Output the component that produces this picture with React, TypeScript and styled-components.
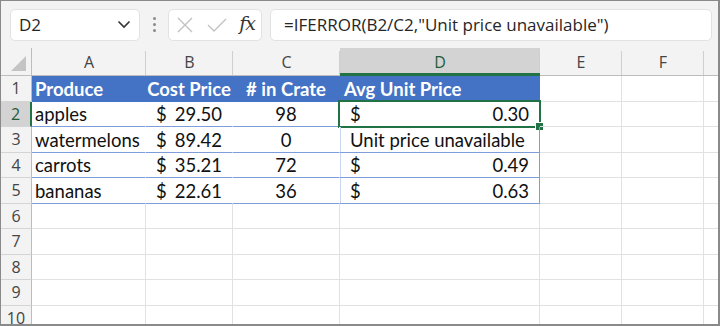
import React from 'react';
import styled, { createGlobalStyle, css } from 'styled-components';

const GlobalStyle = createGlobalStyle`
  html, body { margin: 0; padding: 0; background: #ffffff; }
  * { box-sizing: border-box; }
`;

const UI_FONT = `"Open Sans", "Noto Sans", sans-serif`;
const CELL_FONT = `Lato, "Noto Sans", sans-serif`;
const GRID_LINE = '#e1e1e1';
const TABLE_LINE = '#7f9ddb';
const TABLE_BLUE = '#4472c4';
const EXCEL_GREEN = '#217346';

const Frame = styled.div`
  width: 720px;
  height: 326px;
  border: 1px solid #8a8a8a;
  border-right-width: 2px;
  border-bottom-width: 2px;
  background: #f3f3f3;
  overflow: hidden;
  display: flex;
  flex-direction: column;
`;

const Toolbar = styled.div`
  height: 47px;
  flex: none;
  display: flex;
  align-items: center;
  padding: 0 6px 0 9px;
`;

const Field = styled.div<{ $width?: number }>`
  height: 32px;
  background: #ffffff;
  border: 1px solid #e2e2e2;
  border-radius: 5px;
  display: flex;
  align-items: center;
  ${p => (p.$width ? css`width: ${p.$width}px;` : css`flex: 1;`)}
`;

const NameBox = styled(Field)`
  justify-content: space-between;
  padding: 0 8px 0 8px;
  font-family: ${UI_FONT};
  font-size: 17px;
  color: #262626;
`;

const Dots = styled.div`
  width: 28px;
  display: flex;
  flex-direction: column;
  align-items: center;
  gap: 3px;
  span {
    width: 3px;
    height: 3px;
    border-radius: 50%;
    background: #8a8a8a;
  }
`;

const Buttons = styled(Field)`
  justify-content: space-between;
  padding: 0 6px 0 7px;
  margin-right: 8px;
`;

const Fx = styled.span`
  font-family: "DejaVu Serif", "Liberation Serif", serif;
  font-style: italic;
  font-size: 19px;
  color: #333333;
  letter-spacing: -1px;
  margin-top: -3px;
`;

const Formula = styled(Field)`
  padding: 0 13px;
  font-family: ${UI_FONT};
  font-size: 17px;
  color: #262626;
  white-space: nowrap;
`;

const Sheet = styled.div`
  flex: 1;
  display: grid;
  grid-template-columns: 31px 114px 87px 107px 200px 82px 82px 40px;
  grid-template-rows: 28px repeat(10, 25.5px);
  background: #ffffff;
  overflow: hidden;
`;

const Corner = styled.div`
  background: #f3f3f3;
  border-right: 1px solid #bdbdbd;
  border-bottom: 1px solid #bdbdbd;
  position: relative;
  &::after {
    content: '';
    position: absolute;
    right: 5px;
    bottom: 4px;
    width: 0;
    height: 0;
    border-left: 15px solid transparent;
    border-bottom: 15px solid #c4c4c4;
  }
`;

const ColHead = styled.div<{ $active?: boolean }>`
  display: flex;
  align-items: center;
  justify-content: center;
  font-family: ${UI_FONT};
  font-size: 16px;
  color: ${p => (p.$active ? '#1e5c3a' : '#444444')};
  background: ${p => (p.$active ? '#d3d3d3' : '#f3f3f3')};
  border-bottom: ${p => (p.$active ? `3px solid ${EXCEL_GREEN}` : '1px solid #bdbdbd')};
  padding-top: ${p => (p.$active ? '3px' : '1px')};
  position: relative;
  &::after {
    content: '';
    position: absolute;
    right: 0;
    top: 3px;
    bottom: 0;
    width: 1px;
    background: #cfcfcf;
  }
`;

const RowHead = styled.div<{ $active?: boolean }>`
  display: flex;
  align-items: center;
  justify-content: center;
  font-family: ${UI_FONT};
  font-size: 16px;
  color: ${p => (p.$active ? '#1e5c3a' : '#444444')};
  background: ${p => (p.$active ? '#d3d3d3' : '#f3f3f3')};
  border-right: ${p => (p.$active ? `2px solid ${EXCEL_GREEN}` : '1px solid #bdbdbd')};
  border-bottom: 1px solid #d4d4d4;
`;

type Kind = 'plain' | 'header' | 'body';

const Cell = styled.div<{
  $kind: Kind;
  $align?: 'left' | 'center' | 'split';
  $pad?: number;
  $lastCol?: boolean;
  $selected?: boolean;
  $leftLine?: boolean;
}>`
  position: relative;
  display: flex;
  align-items: center;
  font-family: ${CELL_FONT};
  font-size: 18.5px;
  white-space: nowrap;
  padding: 1px ${p => p.$pad ?? 3}px 0;
  color: #111111;
  border-right: 1px solid ${GRID_LINE};
  border-bottom: 1px solid ${GRID_LINE};
  justify-content: ${p =>
    p.$align === 'center' ? 'center' : p.$align === 'split' ? 'space-between' : 'flex-start'};

  ${p =>
    p.$kind === 'header' &&
    css`
      background: ${TABLE_BLUE};
      color: #ffffff;
      font-weight: 700;
      border-right-color: ${TABLE_BLUE};
      border-bottom-color: ${TABLE_BLUE};
    `}

  ${p =>
    p.$kind === 'body' &&
    css`
      border-right-color: ${p.$lastCol ? TABLE_LINE : '#ffffff'};
      border-bottom-color: ${TABLE_LINE};
    `}

  ${p =>
    p.$leftLine &&
    css`
      box-shadow: inset 1px 0 0 #c9d5ef;
    `}

  ${p =>
    p.$selected &&
    css`
      &::before {
        content: '';
        position: absolute;
        left: -2px;
        top: -2px;
        right: -2px;
        bottom: -2px;
        border: 2px solid ${EXCEL_GREEN};
        pointer-events: none;
      }
      &::after {
        content: '';
        position: absolute;
        right: -5px;
        bottom: -5px;
        width: 7px;
        height: 7px;
        background: ${EXCEL_GREEN};
        border: 1px solid #ffffff;
      }
    `}
`;

const columns = ['A', 'B', 'C', 'D', 'E', 'F', ''];

interface Produce {
  name: string;
  cost: string;
  crate: string;
  avg: string | null;
}

const rows: Produce[] = [
  { name: 'apples', cost: '29.50', crate: '98', avg: '0.30' },
  { name: 'watermelons', cost: '89.42', crate: '0', avg: null },
  { name: 'carrots', cost: '35.21', crate: '72', avg: '0.49' },
  { name: 'bananas', cost: '22.61', crate: '36', avg: '0.63' },
];

const XIcon = () => (
  <svg width="18" height="18" viewBox="0 0 18 18" fill="none" stroke="#c2c2c2" strokeWidth="1.4">
    <path d="M2 2 L16 16 M16 2 L2 16" />
  </svg>
);

const CheckIcon = () => (
  <svg width="20" height="16" viewBox="0 0 20 16" fill="none" stroke="#c2c2c2" strokeWidth="1.4">
    <path d="M1 8 L7 14 L19 2" />
  </svg>
);

const Chevron = () => (
  <svg width="14" height="9" viewBox="0 0 14 9" fill="none" stroke="#333" strokeWidth="1.6">
    <path d="M1.5 1.5 L7 7 L12.5 1.5" />
  </svg>
);

const EmptyCells = ({ count }: { count: number }) => (
  <>
    {Array.from({ length: count }).map((_, i) => (
      <Cell key={i} $kind="plain" />
    ))}
  </>
);

export default function App() {
  return (
    <>
      <GlobalStyle />
      <Frame>
        <Toolbar>
          <NameBox $width={130}>
            <span>D2</span>
            <Chevron />
          </NameBox>
          <Dots>
            <span />
            <span />
            <span />
          </Dots>
          <Buttons $width={94}>
            <XIcon />
            <CheckIcon />
            <Fx>fx</Fx>
          </Buttons>
          <Formula>=IFERROR(B2/C2,"Unit price unavailable")</Formula>
        </Toolbar>
        <Sheet>
          <Corner />
          {columns.map((c, i) => (
            <ColHead key={i} $active={c === 'D'}>
              {c}
            </ColHead>
          ))}

          <RowHead>1</RowHead>
          <Cell $kind="header">Produce</Cell>
          <Cell $kind="header" $align="center">Cost Price</Cell>
          <Cell $kind="header" $align="center"># in Crate</Cell>
          <Cell $kind="header" $pad={4}>Avg Unit Price</Cell>
          <EmptyCells count={3} />

          {rows.map((r, i) => (
            <React.Fragment key={r.name}>
              <RowHead $active={i === 0}>{i + 2}</RowHead>
              <Cell $kind="body">{r.name}</Cell>
              <Cell $kind="body" $align="split" $pad={10}>
                <span>$</span>
                <span>{r.cost}</span>
              </Cell>
              <Cell $kind="body" $align="center">{r.crate}</Cell>
              <Cell
                $kind="body"
                $align={r.avg ? 'split' : 'left'}
                $pad={10}
                $lastCol
                $leftLine={i > 0}
                $selected={i === 0}
              >
                {r.avg ? (
                  <>
                    <span>$</span>
                    <span>{r.avg}</span>
                  </>
                ) : (
                  'Unit price unavailable'
                )}
              </Cell>
              <EmptyCells count={3} />
            </React.Fragment>
          ))}

          {[6, 7, 8, 9, 10].map(n => (
            <React.Fragment key={n}>
              <RowHead>{n}</RowHead>
              <EmptyCells count={7} />
            </React.Fragment>
          ))}
        </Sheet>
      </Frame>
    </>
  );
}
